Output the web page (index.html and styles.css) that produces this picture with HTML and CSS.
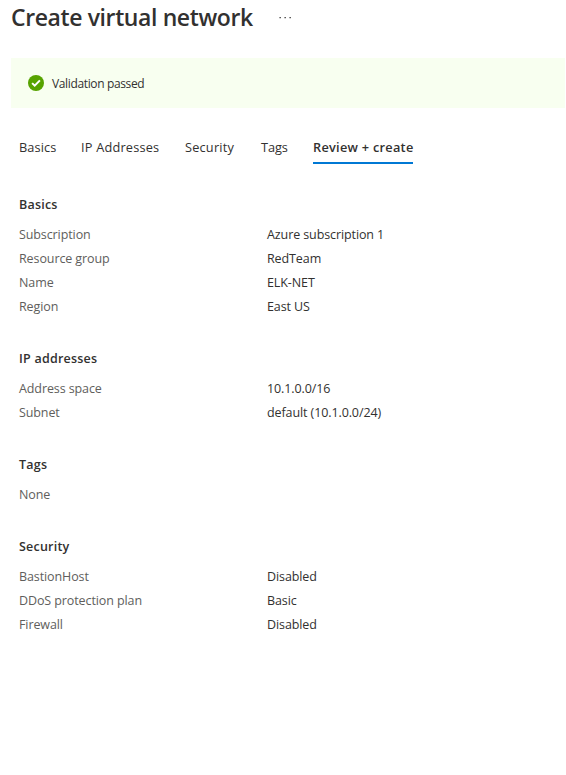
FILE: index.html
```html
<!DOCTYPE html>
<html lang="en">
<head>
<meta charset="utf-8">
<title>Create virtual network</title>
<link rel="stylesheet" href="styles.css">
</head>
<body>
<header class="title-bar">
  <h1>Create virtual network</h1>
  <svg class="more" width="12" height="4" viewBox="0 0 12 4" role="img" aria-label="More"><path d="M.5 1h1.3v1.3H.5zM5.5 1h1.3v1.3H5.5zM10.5 1h1.3v1.3h-1.3z"/></svg>
</header>
<div class="banner">
  <svg width="16" height="16" viewBox="0 0 16 16" aria-hidden="true"><circle cx="8" cy="8" r="8" fill="#57a300"/><path d="M4.1 8.1l2.6 2.5 5.2-5.2" fill="none" stroke="#fff" stroke-width="2"/></svg>
  <span>Validation passed</span>
</div>
<nav class="tabs">
  <a class="tab basics">Basics</a>
  <a class="tab ip">IP Addresses</a>
  <a class="tab security">Security</a>
  <a class="tab tags">Tags</a>
  <a class="tab active">Review + create</a>
</nav>
<main>
  <section>
    <h2>Basics</h2>
    <dl>
      <dt>Subscription</dt><dd>Azure subscription 1</dd>
      <dt>Resource group</dt><dd>RedTeam</dd>
      <dt>Name</dt><dd>ELK-NET</dd>
      <dt>Region</dt><dd>East US</dd>
    </dl>
  </section>
  <section>
    <h2>IP addresses</h2>
    <dl>
      <dt>Address space</dt><dd>10.1.0.0/16</dd>
      <dt>Subnet</dt><dd>default (10.1.0.0/24)</dd>
    </dl>
  </section>
  <section>
    <h2>Tags</h2>
    <dl><dt>None</dt></dl>
  </section>
  <section>
    <h2>Security</h2>
    <dl>
      <dt>BastionHost</dt><dd>Disabled</dd>
      <dt>DDoS protection plan</dt><dd>Basic</dd>
      <dt>Firewall</dt><dd>Disabled</dd>
    </dl>
  </section>
</main>
</body>
</html>
```
FILE: styles.css
```css
* { box-sizing: border-box; }
body {
  margin: 0;
  background: #fff;
  color: #323130;
  font: 12.5px/24px "Segoe UI", "Open Sans", sans-serif;
}
h1, h2, dl, dd { margin: 0; }
.title-bar {
  display: flex;
  align-items: center;
  height: 36px;
  padding-left: 11px;
}
h1 {
  width: 268px;
  padding-bottom: 2px;
  font-size: 23px;
  font-weight: 600;
  line-height: 34px;
  letter-spacing: -0.39px;
  white-space: nowrap;
}
.more { fill: #323130; }
.banner {
  display: flex;
  align-items: center;
  gap: 8px;
  height: 50px;
  margin: 22px 1px 0 11px;
  padding-left: 17px;
  background: #f8fff0;
  font-size: 12px;
  letter-spacing: -0.36px;
}
.banner span { padding-top: 2px; }
.tabs {
  display: flex;
  height: 56px;
  padding: 27px 0 0 19px;
}
.tab {
  height: 29px;
  white-space: nowrap;
  font-size: 12.75px;
  letter-spacing: 0.2px;
}
.basics { width: 62px; letter-spacing: 0.1px; }
.ip { width: 104px; }
.security { width: 76px; }
.tags { width: 52px; letter-spacing: -0.1px; }
.active {
  width: 100px;
  border-bottom: 2px solid #0078d4;
  font-weight: 600;
  letter-spacing: 0.27px;
}
main { padding: 29px 0 0 19px; }
section { margin-bottom: 28px; }
h2 {
  margin-bottom: 6px;
  font-size: 12.5px;
  font-weight: 600;
  line-height: 24px;
  letter-spacing: 0.22px;
}
dl {
  display: grid;
  grid-template-columns: 248px 1fr;
  grid-auto-rows: 24px;
  letter-spacing: -0.1px;
}
dt { color: #605e5c; }
```
